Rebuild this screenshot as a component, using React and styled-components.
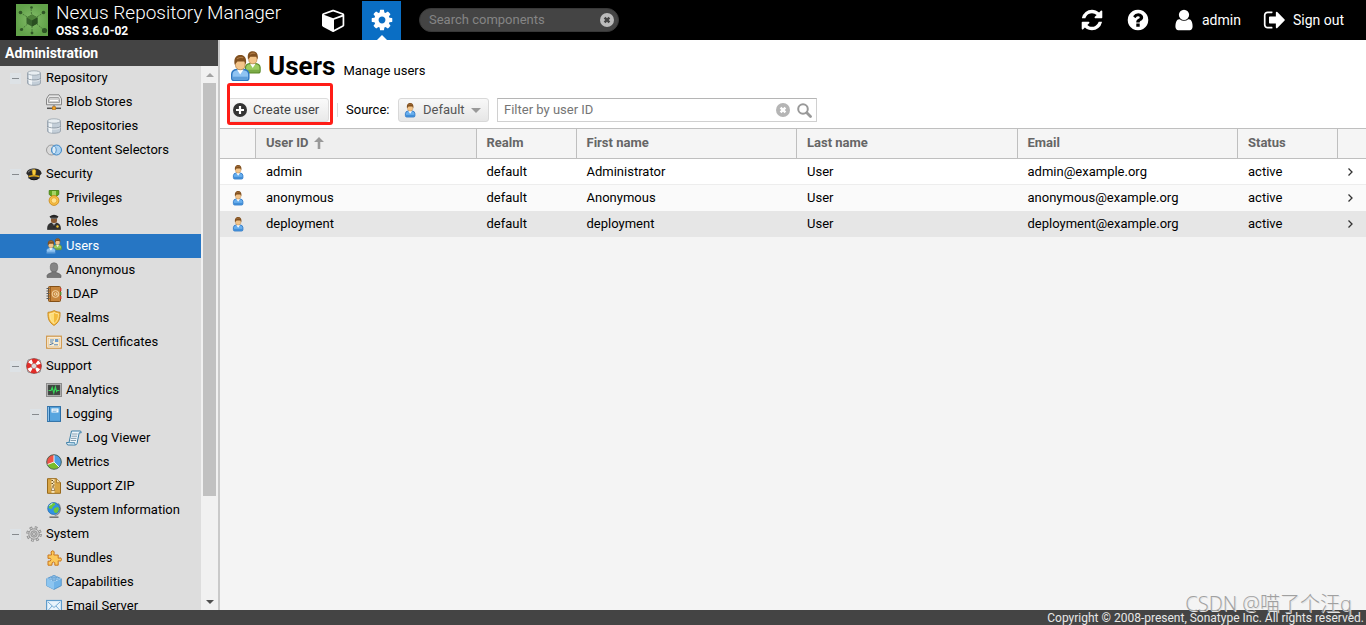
import React, { useState } from 'react';
import styled, { createGlobalStyle } from 'styled-components';

const GlobalStyle = createGlobalStyle`
  * {
    box-sizing: border-box;
  }

  body {
    margin: 0;
    background: #f4f4f4;
    color: #000;
    font: 13px/16px Roboto, "Liberation Sans", sans-serif;
  }

  button, input, select {
    font: inherit;
    margin: 0;
  }

  svg {
    display: block;
    flex: none;
  }
`;

/* ---------- glyphs ---------- */

const glyphs = {
  cube: 'M896 1629l640-349v-636l-640 233v752zm-64-865l698-254-698-254-698 254zm832-252v768q0 35-18 65t-49 47l-704 384q-28 16-61 16t-61-16l-704-384q-31-17-49-47t-18-65v-768q0-40 23-73t61-47l704-256q22-8 44-8t44 8l704 256q38 14 61 47t23 73z',
  cog: 'M1152 896q0-106-75-181t-181-75-181 75-75 181 75 181 181 75 181-75 75-181zm512-109v222q0 12-8 23t-20 13l-185 28q-19 54-39 91 35 50 107 138 10 12 10 25t-9 23q-27 37-99 108t-94 71q-12 0-26-9l-138-108q-44 23-91 38-16 136-29 186-7 28-36 28h-222q-14 0-24.5-8.5t-11.5-21.5l-28-184q-49-16-90-37l-141 107q-10 9-25 9-14 0-25-11-126-114-165-168-7-10-7-23 0-12 8-23 15-21 51-66.5t54-70.5q-27-50-41-99l-183-27q-13-2-21-12.5t-8-23.5v-222q0-12 8-23t19-13l186-28q14-46 39-92-40-57-107-138-10-12-10-24 0-10 9-23 26-36 98.5-107.5t94.5-71.5q13 0 26 10l138 107q44-23 91-38 16-136 29-186 7-28 36-28h222q14 0 24.5 8.5t11.5 21.5l28 184q49 16 90 37l142-107q9-9 24-9 13 0 25 10 129 119 165 170 7 8 7 22 0 12-8 23-15 21-51 66.5t-54 70.5q26 50 41 98l183 28q13 2 21 12.5t8 23.5z',
  refresh: 'M1639 1056q0 5-1 7-64 268-268 434.5t-478 166.5q-146 0-282.5-55t-243.5-157l-129 129q-19 19-45 19t-45-19-19-45v-448q0-26 19-45t45-19h448q26 0 45 19t19 45-19 45l-137 137q71 66 161 102t187 36q134 0 250-65t186-179q11-17 53-117 8-23 30-23h192q13 0 22.5 9.5t9.5 22.5zm25-800v448q0 26-19 45t-45 19h-448q-26 0-45-19t-19-45 19-45l138-138q-148-137-349-137-134 0-250 65t-186 179q-11 17-53 117-8 23-30 23h-199q-13 0-22.5-9.5t-9.5-22.5v-7q65-268 270-434.5t480-166.5q146 0 284 55.5t245 156.5l130-129q19-19 45-19t45 19 19 45z',
  help: 'M1024 1376v-192q0-14-9-23t-23-9h-192q-14 0-23 9t-9 23v192q0 14 9 23t23 9h192q14 0 23-9t9-23zm256-672q0-88-55.5-163t-138.5-116-170-41q-243 0-371 213-15 24 8 42l132 100q7 6 19 6 16 0 25-12 53-68 86-92 34-24 86-24 48 0 85.5 26t37.5 59q0 38-20 61t-68 45q-63 28-115.5 86.5t-52.5 125.5v36q0 14 9 23t23 9h192q14 0 23-9t9-23q0-19 21.5-49.5t54.5-49.5q32-18 49-28.5t46-35 44.5-48 28-60.5 12.5-81zm384 192q0 209-103 385.5t-279.5 279.5-385.5 103-385.5-103-279.5-279.5-103-385.5 103-385.5 279.5-279.5 385.5-103 385.5 103 279.5 279.5 103 385.5z',
  user: 'M1536 1399q0 109-62.5 187t-150.5 78h-854q-88 0-150.5-78t-62.5-187q0-85 8.5-160.5t31.5-152 58.5-131 94-89 134.5-34.5q131 128 313 128t313-128q76 0 134.5 34.5t94 89 58.5 131 31.5 152 8.5 160.5zm-256-887q0 159-112.5 271.5t-271.5 112.5-271.5-112.5-112.5-271.5 112.5-271.5 271.5-112.5 271.5 112.5 112.5 271.5z',
  signOut: 'M704 1440q0 4 1 20t.5 26.5-3 23.5-10 19.5-20.5 6.5h-320q-119 0-203.5-84.5t-84.5-203.5v-704q0-119 84.5-203.5t203.5-84.5h320q13 0 22.5 9.5t9.5 22.5q0 4 1 20t.5 26.5-3 23.5-10 19.5-20.5 6.5h-320q-66 0-113 47t-47 113v704q0 66 47 113t113 47h312l11.5 1 11.5 3 8 5.5 7 9 2 13.5zm928-544q0 26-19 45l-544 544q-19 19-45 19t-45-19-19-45v-288h-448q-26 0-45-19t-19-45v-384q0-26 19-45t45-19h448v-288q0-26 19-45t45-19 45 19l544 544q19 19 19 45z',
};

const Glyph = ({ name, size = 24 }) => (
  <svg width={size} height={size} viewBox="0 0 1792 1792" fill="currentColor" aria-hidden="true">
    <path d={glyphs[name]} />
  </svg>
);

const ClearGlyph = ({ color, cross }) => (
  <svg width="14" height="14" viewBox="0 0 14 14" aria-hidden="true">
    <circle cx="7" cy="7" r="7" fill={color} />
    <path d="M4.6 4.6l4.8 4.8M9.4 4.6L4.6 9.4" stroke={cross} strokeWidth="2.4" />
  </svg>
);

const Logo = () => (
  <svg width="32" height="32" viewBox="0 0 32 32" aria-hidden="true">
    <defs>
      <radialGradient id="logo-bg">
        <stop offset="0" stopColor="#83bd69" />
        <stop offset="1" stopColor="#62a24a" />
      </radialGradient>
    </defs>
    <rect width="32" height="32" fill="url(#logo-bg)" />
    <path d="M16 16L5 9M16 16L15 4M16 16L27 9M16 16L6 25M16 16L16 29M16 16L28 26" stroke="#4a7a3a" strokeDasharray="2 1" />
    <path d="M16 10.500l5.500 3v6L16 22.500l-5.500-3v-6z" fill="#35602a" />
    <path d="M16 10.500l5.500 3L16 16.500l-5.500-3z" fill="#4d8239" />
    <path d="M16 16.500l5.500-3v6l-5.500 3z" fill="#294e20" />
    <g fill="#2f5626">
      <circle cx="4.500" cy="8.500" r="1.800" />
      <circle cx="15.500" cy="3.500" r="1.300" />
      <circle cx="27.500" cy="8.500" r="1.800" />
      <circle cx="5.500" cy="25.500" r="1.600" />
      <circle cx="16" cy="29" r="1.400" />
      <circle cx="28.500" cy="26.500" r="2.600" />
    </g>
  </svg>
);

/* ---------- coloured icons, all on a 16 unit grid ---------- */

const Person = ({ dark, light, x = 0, y = 0, scale = 1 }) => (
  <g transform={`translate(${x} ${y}) scale(${scale})`}>
    <path d="M.4 13v-2.200q.1-2.300 2.800-2.600h3.900q2.700.3 2.800 2.600V13q0 1.300-1.300 1.300H1.700Q.4 14.300.4 13z" fill={light} stroke={dark} strokeWidth=".8" />
    <path d="M1 12.200h8.300v1.600H1z" fill={dark} opacity=".5" />
    <path d="M3.300 8.200h3.700L5.100 11z" fill="#fff" />
    <path d="M2.500 3.500C2.500 1.500 7.800 1.500 7.800 3.500v2.300c0 3.400-5.300 3.400-5.300 0z" fill="#f3c489" stroke="#b07b3d" strokeWidth=".4" />
    <path d="M2 5.500C1.400 1.600 3 .2 5.200.2S8.900 1.600 8.300 5.500L7.400 3.800H3.600z" fill="#81501f" />
    <path d="M3.300 2.200q2-1.300 3.500-.5" stroke="#ad7944" strokeWidth=".7" fill="none" />
  </g>
);

const Drum = () => (
  <>
    <path d="M1.500 3v10c0 3 13 3 13 0V3z" fill="#c3ced8" stroke="#8f9ba6" strokeWidth=".8" />
    <path d="M3 4v10q1.500.7 3 .8V5z" fill="#eef3f6" />
    <ellipse cx="8" cy="3" rx="6.500" ry="2.200" fill="#e8eef2" stroke="#97a3ad" strokeWidth=".8" />
    <path d="M1.500 8.200c0 2.400 13 2.400 13 0" fill="none" stroke="#85919c" strokeWidth=".9" />
    <path d="M1.800 9.300c0 2.400 12.400 2.400 12.400 0" fill="none" stroke="#fff" strokeWidth=".6" />
  </>
);

const drawings = {
  database: <Drum />,
  blob: (
    <>
      <path d="M3 .8h10l2.500 4v6h-15v-6z" fill="#e7e7e7" stroke="#858585" />
      <path d="M3.500 3.500h9l1 2v3h-11v-3z" fill="#cfcfcf" stroke="#909090" strokeWidth=".8" />
      <path d="M4 6.500h8" stroke="#fff" />
      <path d="M8 11v2" stroke="#666" />
      <path d="M1 14.300h14" stroke="#555" strokeWidth="1.500" />
      <rect x="6.300" y="12.800" width="3.400" height="2.800" fill="#f5a623" stroke="#b56d10" strokeWidth=".6" />
    </>
  ),
  selectors: (
    <>
      <circle cx="5.500" cy="8" r="5" fill="#dadada" stroke="#9b9b9b" />
      <circle cx="10.500" cy="8" r="5" fill="#acd2f1" stroke="#3e86c4" />
      <path d="M8 3.800a5 5 0 0 1 0 8.400a5 5 0 0 1 0-8.400z" fill="#dcecf8" stroke="#3e86c4" strokeWidth=".8" />
    </>
  ),
  security: (
    <>
      <path d="M.3 7.500C1 3.600 4.500 2.500 8 2.500s7 1.100 7.700 5L13.700 9.700v2.500q-5.700 3.200-11.400 0V9.700z" fill="#2c2c2c" />
      <path d="M2 6.200Q4.500 3.600 7 3.600" stroke="#858585" fill="none" />
      <path d="M2.700 9.800q5.300-1.600 10.600 0v1.400q-5.300-1.600-10.600 0z" fill="#e2ac1d" />
      <path d="M3.500 12q4.500 2.500 9 0l-1 1.500q-3.500 1.500-7 0z" fill="#0b0b0b" />
      <path d="M8 3l2 1.400-.5 4L8 9.500 6.500 8.400l-.5-4z" fill="#f9cf3d" stroke="#a87709" strokeWidth=".4" />
    </>
  ),
  privileges: (
    <>
      <path d="M3.200.5h9.600v4l-2.800 2H6l-2.800-2z" fill="#63a51d" stroke="#3e7a0b" strokeWidth=".8" />
      <path d="M6 1h4v4.500H6z" fill="#a6d565" />
      <circle cx="8" cy="10.500" r="4.900" fill="#f7be45" stroke="#c98a1d" strokeWidth=".9" />
      <circle cx="8" cy="10.500" r="2.800" fill="#ffe28e" stroke="#e2a32f" strokeWidth=".8" />
    </>
  ),
  roles: (
    <>
      <path d="M1.500 15.500c0-4 1-6 4-6.500h5c3 .5 4 2.500 4 6.500z" fill="#333" stroke="#1b1b1b" strokeWidth=".6" />
      <path d="M6 8.500h4L8 12z" fill="#fff" />
      <path d="M8 9.500v4" stroke="#222" />
      <rect x="5" y="3" width="6" height="6" rx="2.500" fill="#8a5a33" />
      <path d="M3.500 2.500Q8-1 12.500 2.500L11 4.500H5z" fill="#262626" />
      <path d="M5 4.200h6" stroke="#777" />
      <circle cx="11.500" cy="12.500" r="1.200" fill="#f3c232" />
    </>
  ),
  users: (
    <>
      <Person dark="#5c8c2b" light="#9ccb60" x={7.400} y={0} scale={0.820} />
      <Person dark="#2d77c1" light="#8fc4f3" x={0} y={2} scale={0.960} />
    </>
  ),
  userBlue: <Person dark="#1f6fc2" light="#67aeee" x={3} y={0.700} />,
  anonymous: (
    <>
      <path d="M1 15.500v-2q.5-2 5-3V8.500h4v2q4.500 1 5 3v2z" fill="#777" stroke="#5d5d5d" strokeWidth=".6" />
      <rect x="4.300" y=".8" width="7.400" height="9" rx="3.500" fill="#858585" stroke="#666" strokeWidth=".6" />
    </>
  ),
  ldap: (
    <>
      <rect x="2.500" y=".5" width="12" height="15" rx="1" fill="#c6853c" stroke="#845016" />
      <path d="M14.700 2v3M14.700 10v3" stroke="#d3422b" strokeWidth="1.400" />
      <path d="M14.700 6v3" stroke="#5b8f2e" strokeWidth="1.400" />
      <path d="M4.500 1v14" stroke="#9a5f20" />
      <path d="M.5 2.500h3M.5 5h3M.5 7.500h3M.5 10h3M.5 12.500h3" stroke="#5a5a5a" />
      <circle cx="9.500" cy="8" r="3.400" fill="none" stroke="#f7dcae" strokeWidth=".9" />
      <circle cx="9.500" cy="8" r="1.300" fill="none" stroke="#f7dcae" strokeWidth=".9" />
      <path d="M10.900 6.500v2.600h1.500" fill="none" stroke="#f7dcae" strokeWidth=".7" />
    </>
  ),
  realms: (
    <>
      <path d="M8 .6q3 1.700 6 1.700c.2 6-.7 10-6 13.100C2.700 12.300 1.800 8.300 2 2.300 5 2.300 8 .6 8 .6z" fill="#f7be43" stroke="#c98c26" />
      <path d="M8 2.500Q10 3.700 12.300 3.800c0 4-.7 7.200-4.300 9.700C4.400 11 3.700 7.800 3.700 3.800 6 3.700 8 2.500 8 2.500z" fill="#fddd79" stroke="#fff0bd" strokeWidth=".7" />
      <path d="M8 3v10c3-2.500 4-5 4-8.800Q9.500 4 8 3z" fill="#f3bb3b" />
    </>
  ),
  certificate: (
    <>
      <rect x=".7" y="2.200" width="14.600" height="12" fill="#fff" stroke="#cf9443" strokeWidth="1.200" />
      <rect x="2.600" y="4" width="10.800" height="8.300" fill="#f9edd3" stroke="#e4bd7c" strokeWidth=".6" />
      <path d="M4 6h4M4 8h3M8 10.800h4" stroke="#5b87b5" />
      <path d="M3.500 10.800l4-1.500" stroke="#305f97" strokeWidth=".9" />
      <rect x="9" y="5" width="3.300" height="3" fill="#6c9ccd" />
    </>
  ),
  support: (
    <>
      <path d="M2 2q6-3 12 0 3 6 0 12-6 3-12 0-3-6 0-12z" fill="none" stroke="#777" strokeWidth=".8" />
      <circle cx="8" cy="8" r="5" fill="none" stroke="#e32d28" strokeWidth="4.500" />
      <circle cx="8" cy="8" r="5" fill="none" stroke="#fff" strokeWidth="4.300" strokeDasharray="3 4.854" strokeDashoffset="-2.430" />
      <circle cx="8" cy="8" r="7.300" fill="none" stroke="#b6201d" strokeWidth=".5" />
      <circle cx="8" cy="8" r="2.700" fill="#ddd" stroke="#a82521" strokeWidth=".5" />
    </>
  ),
  analytics: (
    <>
      <rect x=".5" y="1.500" width="15" height="13" fill="#c5c5c5" stroke="#8b8b8b" />
      <rect x="2" y="3" width="12" height="10" fill="#3f4540" stroke="#555" strokeWidth=".5" />
      <path d="M2.500 8.500H5l1.200-3 1.600 5.500 1.600-6 1.200 4.500.8-1h2" fill="none" stroke="#36d65a" strokeWidth="1.100" />
    </>
  ),
  logging: (
    <>
      <rect x="1.500" y=".6" width="13" height="14.800" fill="#57a5df" stroke="#2a6da5" />
      <path d="M3.500 1v14" stroke="#2a6da5" />
      <path d="M2.300 1v14" stroke="#aed7f5" strokeWidth=".8" />
      <rect x="5.500" y="2.500" width="7" height="4" fill="#fff" />
      <path d="M6.500 4h5M6.500 5.500h4" stroke="#6ea9d6" strokeWidth=".7" />
    </>
  ),
  viewer: (
    <>
      <path d="M5.500 1h8.500q1.500 0 1.200 1.800h-2L11 13.500q-.4 1.500-2 1.500H2q-1.600-.3-1.400-2.500H3z" fill="#eef6fb" stroke="#3c7fa7" />
      <path d="M.7 12.600h8q-.3 2 .8 2.400" fill="#b6d7ea" stroke="#3c7fa7" strokeWidth=".8" />
      <path d="M6 4h5.500M5.500 6.200H11M5 8.400h5.500M4.600 10.500H10" stroke="#7a95a7" strokeWidth=".9" />
    </>
  ),
  metrics: (
    <>
      <circle cx="8" cy="8" r="7.300" fill="#79bd2c" />
      <path d="M8 8V.7A7.300 7.300 0 0 0 1.200 10.600z" fill="#ef5448" />
      <path d="M8 8V.7A7.300 7.300 0 0 1 13.200 13.200z" fill="#4d9de4" />
      <path d="M8 .7V8l5.200 5.200M8 8l-6.800 2.600" stroke="#fff" fill="none" strokeWidth=".9" />
      <circle cx="8" cy="8" r="7.300" fill="none" stroke="#4a5d57" strokeWidth=".9" />
    </>
  ),
  zip: (
    <>
      <path d="M1.500.7h9l4 4v10.600h-13z" fill="#d9a645" stroke="#98691b" />
      <path d="M10.500.7v4h4" fill="#f5dca6" stroke="#98691b" strokeWidth=".7" />
      <rect x="5.500" y="1.200" width="3" height="13.600" fill="#f6e5be" />
      <path d="M5.500 2.500H7M7 4h1.500M5.500 5.500H7M7 7h1.500" stroke="#6b4a12" />
      <path d="M7 7.500l1.700 5H5.300z" fill="#fff" stroke="#7d5618" strokeWidth=".7" />
    </>
  ),
  globe: (
    <>
      <path d="M3.500 15.200h9" stroke="#777" strokeWidth="1.600" />
      <path d="M12.200 1.500a7 7 0 0 1-3.500 12" stroke="#8b8b8b" strokeWidth="1.200" fill="none" />
      <circle cx="7.700" cy="6.500" r="6" fill="#3293e4" stroke="#1c61a6" strokeWidth=".7" />
      <path d="M4 2.500Q6 .6 8.500 1l1 1.500-2.500 2L5.500 7 2.500 6zM8.500 6l3.500-1 1 2-1.500 3.500L9 11 7.500 8.500z" fill="#70c837" />
      <path d="M3.500 3.800q1.500-2 3-2.200" stroke="#d7f3ff" fill="none" />
    </>
  ),
  system: (
    <>
      <circle cx="8" cy="8" r="6.500" fill="none" stroke="#8a8a8a" strokeWidth="2.600" strokeDasharray="2.600 2.505" />
      <circle cx="8" cy="8" r="6.200" fill="none" stroke="#d0d0d0" strokeWidth="1.800" strokeDasharray="1.200 3.670" strokeDashoffset="-.6" />
      <circle cx="8" cy="8" r="5.200" fill="#d2d2d2" stroke="#8a8a8a" strokeWidth=".8" />
      <circle cx="8" cy="8" r="3.200" fill="#bcbcbc" stroke="#8e8e8e" strokeWidth=".8" />
      <circle cx="8" cy="8" r="1.400" fill="#e6e6e6" stroke="#808080" strokeWidth=".7" />
    </>
  ),
  bundles: (
    <path d="M2 5h3.500Q4 1 6.500.8 9 .8 7.800 5h4.400v3.200q3.500-1.300 3.300 1.300 0 2.600-3.300 1.300v4.400H8.800Q9.500 12 7.500 12t-1.600 3.200H2v-4q3 .5 3-1.600T2 8.400z" fill="#fcc95a" stroke="#c9761e" strokeLinejoin="round" />
  ),
  capabilities: (
    <>
      <path d="M8 1.500l7.300 3.200v7L8 15.400.7 11.700v-7z" fill="#6fb3e8" stroke="#4a8dc4" strokeWidth=".8" />
      <path d="M8 1.500l7.300 3.200L8 8 .7 4.700z" fill="#b9dcf6" />
      <path d="M8 8v7.400L.7 11.700v-7z" fill="#8cc5f0" />
      <g fill="#9ecdf1" stroke="#3f83bd" strokeWidth=".6">
        <ellipse cx="8" cy="2.800" rx="1.900" ry="1" />
        <ellipse cx="4.500" cy="4.300" rx="1.900" ry="1" />
        <ellipse cx="11.500" cy="4.300" rx="1.900" ry="1" />
        <ellipse cx="8" cy="5.900" rx="1.900" ry="1" />
      </g>
    </>
  ),
  email: (
    <>
      <rect x=".6" y="2.500" width="14.800" height="11.500" fill="#e9f4fc" stroke="#5f9ccb" strokeWidth="1.200" />
      <path d="M2 4l6 5.500L14 4M2 12.500l4-4.500M14 12.500L10 8" fill="none" stroke="#76acd4" />
    </>
  ),
};

const Icon = ({ name, size = 16 }) => (
  <svg width={size} height={size} viewBox="0 0 16 16" aria-hidden="true">
    {drawings[name]}
  </svg>
);

/* ---------- layout ---------- */

const Page = styled.div`
  display: flex;
  flex-direction: column;
  height: 100vh;
  overflow: hidden;
  position: relative;
`;

const Header = styled.header`
  display: flex;
  align-items: center;
  flex: none;
  height: 40px;
  padding: 0 22px 0 16px;
  background: #000;
  color: #fff;
`;

const Brand = styled.div`
  display: flex;
  align-items: center;
  gap: 8px;
  width: 298px;
`;

const Product = styled.div`
  font-size: 19px;
  font-weight: 300;
  line-height: 22px;
  white-space: nowrap;
`;

const Version = styled.div`
  font-size: 12px;
  font-weight: 700;
  line-height: 14px;
`;

const ModeButton = styled.button`
  display: flex;
  align-items: center;
  justify-content: center;
  position: relative;
  width: 39px;
  height: 39px;
  margin: 1px 9px 0 0;
  padding: 0 0 2px;
  border: 0;
  background: ${({ $active }) => ($active ? '#0a6ec4' : 'transparent')};
  color: #fff;

  &::after {
    content: '';
    display: ${({ $active }) => ($active ? 'block' : 'none')};
    position: absolute;
    bottom: 0;
    border: 5px solid transparent;
    border-top: 0;
    border-bottom-color: #fff;
  }
`;

const SearchBox = styled.div`
  display: flex;
  align-items: center;
  width: 200px;
  height: 24px;
  margin-left: 9px;
  padding: 0 4px 0 9px;
  border: 1px solid #383838;
  border-radius: 12px;
  background: #444;

  input {
    flex: 1;
    min-width: 0;
    padding: 0;
    border: 0;
    outline: 0;
    background: none;
    color: #fff;
  }

  input::placeholder {
    color: #858585;
  }
`;

const PlainButton = styled.button`
  display: flex;
  align-items: center;
  gap: 6px;
  padding: 0;
  border: 0;
  background: none;
  color: inherit;
`;

const Actions = styled.div`
  display: flex;
  align-items: center;
  gap: 22px;
  margin-left: auto;
  font-size: 14px;
`;

const Body = styled.div`
  display: flex;
  flex: 1;
  min-height: 0;
`;

const Sidebar = styled.nav`
  display: flex;
  flex-direction: column;
  flex: none;
  width: 220px;
  border-right: 2px solid #c9c9c9;
  background: #ddd;
`;

const SidebarTitle = styled.h2`
  flex: none;
  margin: 0;
  padding: 5px;
  background: #444;
  color: #fff;
  font-size: 14px;
  font-weight: 700;
  line-height: 16px;
`;

const SidebarBody = styled.div`
  display: flex;
  flex: 1;
  min-height: 0;
`;

const Tree = styled.ul`
  flex: 1;
  margin: 0;
  padding: 0;
  overflow: hidden;
  list-style: none;
`;

const Node = styled.a`
  display: flex;
  align-items: center;
  height: 24px;
  padding-left: ${({ $level }) => 10 + $level * 20}px;
  background: ${({ $selected }) => ($selected ? '#2676c4' : 'transparent')};
  color: ${({ $selected }) => ($selected ? '#fff' : '#000')};
  text-decoration: none;
  white-space: nowrap;

  > svg {
    margin-right: 4px;
  }
`;

const Expander = styled.span`
  display: flex;
  align-items: center;
  width: 11px;
  height: 11px;
  margin-right: 5px;
  padding: 0 2px;
  background: ${({ $open }) => ($open ? '#dde2e6' : 'transparent')};

  &::before {
    content: '';
    width: 7px;
    height: 1px;
    background: ${({ $open }) => ($open ? '#868b90' : 'transparent')};
  }
`;

const ScrollTrack = styled.div`
  display: flex;
  flex-direction: column;
  align-items: center;
  flex: none;
  width: 17px;
  background: #f1f1f1;
`;

const ScrollArrow = styled.span`
  display: flex;
  align-items: center;
  height: 17px;

  &::before {
    content: '';
    border: 4px solid transparent;
    border-top: ${({ $down }) => ($down ? '4px solid #505050' : '0')};
    border-bottom: ${({ $down }) => ($down ? '0' : '4px solid #a3a3a3')};
  }
`;

const ScrollLane = styled.div`
  flex: 1;
  width: 13px;
`;

const ScrollThumb = styled.div`
  height: 81%;
  background: #c1c1c1;
`;

const Content = styled.main`
  display: flex;
  flex-direction: column;
  flex: 1;
  min-width: 0;
`;

const Heading = styled.div`
  display: flex;
  align-items: baseline;
  padding: 10px 11px 0;
  background: #fff;

  > svg {
    align-self: center;
    margin-right: 7px;
  }

  h1 {
    margin: 0 8px 0 0;
    font-size: 26px;
    font-weight: 700;
    line-height: 32px;
  }
`;

const Toolbar = styled.div`
  display: flex;
  align-items: center;
  gap: 8px;
  padding: 16px 8px 6px;
  background: #fff;
`;

const Marked = styled.div`
  position: relative;
`;

const Mark = styled.div`
  position: absolute;
  inset: -15px -4px -3px -1px;
  border: 3px solid #ff1d17;
  border-radius: 3px;
  pointer-events: none;
`;

const ToolButton = styled.button`
  display: flex;
  align-items: center;
  gap: 6px;
  width: 101px;
  height: 24px;
  padding: 0 4px;
  border: 1px solid #dcdcdc;
  border-radius: 3px;
  background: linear-gradient(#fafafa, #e9e9e9);
  color: #444;
  white-space: nowrap;
`;

const Separator = styled.span`
  width: 1px;
  height: 14px;
  background: #dcdcdc;
`;

const SourceLabel = styled.label`
  width: 44px;
`;

const Dropdown = styled.div`
  display: flex;
  align-items: center;
  width: 91px;
  height: 24px;
  padding: 0 7px 0 3px;
  border: 1px solid #d8d8d8;
  border-radius: 3px;
  background: linear-gradient(#f8f8f8, #e6e6e6);
  color: #555;

  select {
    flex: 1;
    min-width: 0;
    padding: 0 0 0 5px;
    border: 0;
    outline: 0;
    appearance: none;
    background: none;
    color: inherit;
  }

  &::after {
    content: '';
    border: 5px solid transparent;
    border-top-color: #999;
    border-bottom: 0;
  }
`;

const FilterBox = styled.div`
  display: flex;
  align-items: center;
  gap: 7px;
  width: 320px;
  height: 24px;
  padding: 0 4px 0 6px;
  border: 1px solid #d0d0d0;
  border-top-color: #b5b5b5;
  background: #fff;

  input {
    flex: 1;
    min-width: 0;
    padding: 0;
    border: 0;
    outline: 0;
  }

  input::placeholder {
    color: #757575;
  }
`;

const Grid = styled.table`
  width: 100%;
  table-layout: fixed;
  border-collapse: separate;
  border-spacing: 0;
  text-align: left;

  th {
    height: 31px;
    padding: 0 10px 2px;
    border: solid #bfbfbf;
    border-width: 1px 1px 1px 0;
    background: #f5f5f5;
    color: #666;
    font-weight: 700;
  }

  th:last-child {
    border-right: 0;
  }

  th:nth-child(2) {
    background: #efefef;
  }

  td {
    height: 26px;
    padding: 0 10px;
  }
`;

const Col = styled.col`
  width: ${({ $width }) => ($width ? `${$width}px` : 'auto')};
`;

const Row = styled.tr`
  background: ${({ $tone }) => $tone};

  td {
    border-bottom: 1px solid ${({ $tone }) => ($tone === '#fff' ? '#ededed' : $tone)};
  }
`;

const SortLabel = styled.span`
  display: flex;
  align-items: center;
  gap: 5px;
`;

const Footer = styled.footer`
  flex: none;
  height: 15px;
  padding-right: 2px;
  background: #444;
  color: #e8e8e8;
  font-size: 12px;
  line-height: 16px;
  text-align: right;
`;

const Watermark = styled.div`
  position: absolute;
  right: 14px;
  bottom: 8px;
  color: #a0a0a0;
  font: 300 20px/26px "Open Sans", "Noto Sans CJK SC", sans-serif;
  text-shadow: 1px 1px 0 #e4e4e4;
  pointer-events: none;
`;

/* ---------- data ---------- */

const tree = [
  { label: 'Repository', icon: 'database', level: 0, open: true },
  { label: 'Blob Stores', icon: 'blob', level: 1 },
  { label: 'Repositories', icon: 'database', level: 1 },
  { label: 'Content Selectors', icon: 'selectors', level: 1 },
  { label: 'Security', icon: 'security', level: 0, open: true },
  { label: 'Privileges', icon: 'privileges', level: 1 },
  { label: 'Roles', icon: 'roles', level: 1 },
  { label: 'Users', icon: 'users', level: 1 },
  { label: 'Anonymous', icon: 'anonymous', level: 1 },
  { label: 'LDAP', icon: 'ldap', level: 1 },
  { label: 'Realms', icon: 'realms', level: 1 },
  { label: 'SSL Certificates', icon: 'certificate', level: 1 },
  { label: 'Support', icon: 'support', level: 0, open: true },
  { label: 'Analytics', icon: 'analytics', level: 1 },
  { label: 'Logging', icon: 'logging', level: 1, open: true },
  { label: 'Log Viewer', icon: 'viewer', level: 2 },
  { label: 'Metrics', icon: 'metrics', level: 1 },
  { label: 'Support ZIP', icon: 'zip', level: 1 },
  { label: 'System Information', icon: 'globe', level: 1 },
  { label: 'System', icon: 'system', level: 0, open: true },
  { label: 'Bundles', icon: 'bundles', level: 1 },
  { label: 'Capabilities', icon: 'capabilities', level: 1 },
  { label: 'Email Server', icon: 'email', level: 1 },
];

const users = [
  { id: 'admin', first: 'Administrator', tone: '#fff' },
  { id: 'anonymous', first: 'Anonymous', tone: '#fafafa' },
  { id: 'deployment', first: 'deployment', tone: '#e6e6e6' },
];

const TopBar = () => (
  <Header>
    <Brand>
      <Logo />
      <div>
        <Product>Nexus Repository Manager</Product>
        <Version>OSS 3.6.0-02</Version>
      </div>
    </Brand>
    <ModeButton aria-label="Browse"><Glyph name="cube" /></ModeButton>
    <ModeButton $active aria-label="Administration"><Glyph name="cog" /></ModeButton>
    <SearchBox>
      <input type="text" placeholder="Search components" aria-label="Search components" />
      <PlainButton aria-label="Clear search"><ClearGlyph color="#bbb" cross="#444" /></PlainButton>
    </SearchBox>
    <Actions>
      <PlainButton aria-label="Refresh"><Glyph name="refresh" /></PlainButton>
      <PlainButton aria-label="Help"><Glyph name="help" /></PlainButton>
      <PlainButton><Glyph name="user" />admin</PlainButton>
      <PlainButton><Glyph name="signOut" />Sign out</PlainButton>
    </Actions>
  </Header>
);

const Navigation = () => {
  const [selected, setSelected] = useState('Users');

  return (
    <Sidebar aria-label="Administration">
      <SidebarTitle>Administration</SidebarTitle>
      <SidebarBody>
        <Tree>
          {tree.map(({ label, icon, level, open }) => (
            <li key={label}>
              <Node
                href="#"
                $level={level}
                $selected={label === selected}
                onClick={() => setSelected(label)}
              >
                <Expander $open={open} />
                <Icon name={icon} />
                {label}
              </Node>
            </li>
          ))}
        </Tree>
        <ScrollTrack aria-hidden="true">
          <ScrollArrow />
          <ScrollLane><ScrollThumb /></ScrollLane>
          <ScrollArrow $down />
        </ScrollTrack>
      </SidebarBody>
    </Sidebar>
  );
};

const UserGrid = () => (
  <Grid>
    <colgroup>
      <Col $width={36} />
      <Col />
      <Col $width={100} />
      <Col />
      <Col />
      <Col />
      <Col $width={100} />
      <Col $width={28} />
    </colgroup>
    <thead>
      <tr>
        <th aria-label="Icon" />
        <th aria-sort="ascending">
          <SortLabel>
            User ID
            <svg width="10" height="12" viewBox="0 0 10 12" aria-hidden="true">
              <path d="M5 0l5 5H6.300v7H3.700V5H0z" fill="#999" />
            </svg>
          </SortLabel>
        </th>
        <th>Realm</th>
        <th>First name</th>
        <th>Last name</th>
        <th>Email</th>
        <th>Status</th>
        <th aria-label="Open" />
      </tr>
    </thead>
    <tbody>
      {users.map(({ id, first, tone }) => (
        <Row key={id} $tone={tone}>
          <td><Icon name="userBlue" /></td>
          <td>{id}</td>
          <td>default</td>
          <td>{first}</td>
          <td>User</td>
          <td>{id}@example.org</td>
          <td>active</td>
          <td>
            <svg width="5" height="8" viewBox="0 0 5 8" fill="none" stroke="#333" aria-hidden="true">
              <path d="M.5 .5L4 4 .5 7.500" strokeWidth="1.300" />
            </svg>
          </td>
        </Row>
      ))}
    </tbody>
  </Grid>
);

const App = () => (
  <Page>
    <GlobalStyle />
    <TopBar />
    <Body>
      <Navigation />
      <Content>
        <Heading>
          <Icon name="users" size={30} />
          <h1>Users</h1>
          <span>Manage users</span>
        </Heading>
        <Toolbar>
          <Marked>
            <ToolButton>
              <svg width="14" height="14" viewBox="0 0 14 14" aria-hidden="true">
                <circle cx="7" cy="7" r="7" fill="#333" />
                <path d="M7 3v8M3 7h8" stroke="#fff" strokeWidth="2.200" />
              </svg>
              Create user
            </ToolButton>
            <Mark />
          </Marked>
          <Separator />
          <SourceLabel htmlFor="source">Source:</SourceLabel>
          <Dropdown>
            <Icon name="userBlue" />
            <select id="source">
              <option>Default</option>
            </select>
          </Dropdown>
          <FilterBox>
            <input type="text" placeholder="Filter by user ID" aria-label="Filter by user ID" />
            <PlainButton aria-label="Clear filter"><ClearGlyph color="#b5b5b5" cross="#fff" /></PlainButton>
            <PlainButton aria-label="Filter">
              <svg width="15" height="15" viewBox="0 0 15 15" fill="none" stroke="#999" aria-hidden="true">
                <circle cx="6" cy="6" r="4.800" strokeWidth="2" />
                <path d="M9.800 9.800l3.700 3.700" strokeWidth="2.800" strokeLinecap="round" />
              </svg>
            </PlainButton>
          </FilterBox>
        </Toolbar>
        <UserGrid />
      </Content>
    </Body>
    <Footer>Copyright © 2008-present, Sonatype Inc. All rights reserved.</Footer>
    <Watermark>CSDN @喵了个汪q</Watermark>
  </Page>
);

export default App;
